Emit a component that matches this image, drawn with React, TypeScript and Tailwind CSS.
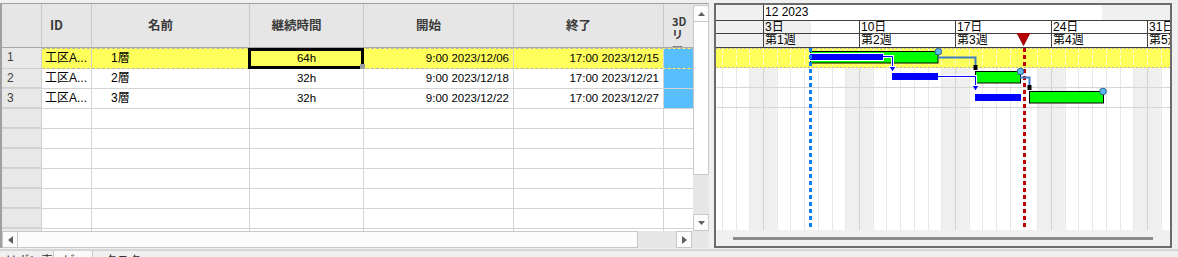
import type { ReactNode } from 'react'

type Task = {
  no: number
  area: string
  name: string
  duration: string
  start: string
  end: string
}

const TASKS: Task[] = [
  { no: 1, area: '工区A...', name: '1層', duration: '64h', start: '9:00 2023/12/06', end: '17:00 2023/12/15' },
  { no: 2, area: '工区A...', name: '2層', duration: '32h', start: '9:00 2023/12/18', end: '17:00 2023/12/21' },
  { no: 3, area: '工区A...', name: '3層', duration: '32h', start: '9:00 2023/12/22', end: '17:00 2023/12/27' },
]

const EMPTY_ROWS = [4, 5, 6, 7, 8, 9, 10]

const WEEKS = [
  { day: '3日', week: '第1週' },
  { day: '10日', week: '第2週' },
  { day: '17日', week: '第3週' },
  { day: '24日', week: '第4週' },
  { day: '31日', week: '第5週' },
]

// one day on the timeline, in px; day 0 is Sunday 3 Dec
const DAY = 96 / 7
const dayX = (k: number) => 47 + DAY * k
const DAY_INDEXES = Array.from({ length: 33 }, (_, i) => i - 3)

function Arrow({ dir }: { dir: 'up' | 'down' | 'left' | 'right' }) {
  const points = {
    up: '0,4 7,4 3.5,0',
    down: '0,0 7,0 3.5,4',
    left: '5,0 5,8 0,4',
    right: '0,0 0,8 5,4',
  }[dir]
  const vertical = dir === 'up' || dir === 'down'
  return (
    <svg width={vertical ? 7 : 5} height={vertical ? 4 : 8} aria-hidden="true">
      <polygon points={points} fill="#606060" />
    </svg>
  )
}

function HeaderCell({ className, children }: { className: string; children?: ReactNode }) {
  return (
    <div
      className={`flex shrink-0 items-center justify-center border-r border-[#c8c8c8] pr-[20px] font-['Noto_Sans_CJK_JP',sans-serif] text-[12.5px] font-bold text-[#3a3a3a] ${className}`}
    >
      {children}
    </div>
  )
}

function DataCells({ task, selected = false }: { task?: Task; selected?: boolean }) {
  return (
    <>
      <div className="w-[50px] shrink-0 overflow-hidden border-r border-[#d4d4d4] pl-[3px] text-[12px] leading-[19px] whitespace-nowrap">
        {task?.area}
      </div>
      <div className="w-[158px] shrink-0 border-r border-[#d4d4d4] pl-[19px] text-[12px] leading-[19px]">
        {task?.name}
      </div>
      <div className="relative w-[114px] shrink-0 border-r border-[#d4d4d4] text-center text-[11.5px] leading-[19px]">
        {task?.duration}
        {selected ? (
          <>
            <div className="absolute -top-[1px] -right-[1px] -bottom-[1px] -left-[2px] border-[3px] border-black" />
            <div className="absolute -right-[2px] -bottom-[1px] h-[5px] w-[5px] bg-[#9c9c9c]" />
          </>
        ) : null}
      </div>
      <div className="w-[150px] shrink-0 border-r border-[#d4d4d4] pr-[4px] text-right text-[11.5px] leading-[19px]">
        {task?.start}
      </div>
      <div className="w-[150px] shrink-0 border-r border-[#d4d4d4] pr-[4px] text-right text-[11.5px] leading-[19px]">
        {task?.end}
      </div>
      <div className={`w-[29px] shrink-0 ${task ? 'bg-[#58befc]' : ''}`} />
    </>
  )
}

function RowHeader({ no }: { no?: number }) {
  return (
    <div className="w-[40px] shrink-0 border-r border-b border-[#d0d0d0] bg-[#e8e8e8] pl-[5px] text-[12px] leading-[19px] text-[#404040]">
      {no}
    </div>
  )
}

function TaskGrid() {
  const [first, ...rest] = TASKS

  return (
    <div className="flex h-[245px] w-[709px] shrink-0 flex-col border-t border-l-2 border-[#a0a0a0]">
      <div className="flex h-[227px]">
        <div className="w-[691px] shrink-0 bg-white">
          <div className="flex h-[44px] border-b border-[#a8a8a8] bg-[#e6e6e6]">
            <div className="w-[40px] shrink-0 border-r border-[#c8c8c8]" />
            <HeaderCell className="w-[50px]">ID</HeaderCell>
            <HeaderCell className="w-[158px]">名前</HeaderCell>
            <HeaderCell className="w-[114px]">継続時間</HeaderCell>
            <HeaderCell className="w-[150px]">開始</HeaderCell>
            <HeaderCell className="w-[150px]">終了</HeaderCell>
            <div className="w-[29px] shrink-0 overflow-hidden pt-[11px] pl-[8px] font-['Noto_Sans_CJK_JP',sans-serif] text-[11px] leading-[13px] font-bold break-all text-[#3a3a3a]">
              3Dリーー
            </div>
          </div>

          <div className="h-[183px] overflow-hidden">
            <div className="flex h-[21px]">
              <RowHeader no={first.no} />
              <div className="flex border-y border-dashed border-[#b4b4b4] bg-[#ffff5c]">
                <DataCells task={first} selected />
              </div>
            </div>
            {rest.map((task) => (
              <div key={task.no} className="flex h-[20px] border-b border-[#d4d4d4]">
                <RowHeader no={task.no} />
                <DataCells task={task} />
              </div>
            ))}
            {EMPTY_ROWS.map((row) => (
              <div key={row} className="flex h-[20px] border-b border-[#d4d4d4]">
                <RowHeader />
                <DataCells />
              </div>
            ))}
          </div>
        </div>

        <div className="flex w-[16px] shrink-0 flex-col bg-[#e6e6e6]">
          <div className="mt-[1px] flex h-[17px] items-center justify-center border border-[#c8c8c8] bg-[#fcfcfc]">
            <Arrow dir="up" />
          </div>
          <div className="h-[153px] border-x border-b border-[#c8c8c8] bg-white" />
          <div className="flex-1" />
          <div className="flex h-[17px] items-center justify-center border border-[#c8c8c8] bg-[#fcfcfc]">
            <Arrow dir="down" />
          </div>
        </div>
      </div>

      <div className="flex h-[17px] bg-[#e6e6e6]">
        <div className="flex w-[16px] items-center justify-center border border-[#c8c8c8] bg-[#fcfcfc]">
          <Arrow dir="left" />
        </div>
        <div className="w-[620px] border-y border-r border-[#c8c8c8] bg-[#fcfcfc]" />
        <div className="w-[38px]" />
        <div className="flex w-[16px] items-center justify-center border border-[#c8c8c8] bg-[#fcfcfc]">
          <Arrow dir="right" />
        </div>
        <div className="flex-1" />
      </div>
    </div>
  )
}

function TimelineBody() {
  return (
    <svg width={454} height={182} className="block" aria-hidden="true">
      <rect width={454} height={182} fill="#ffffff" />
      {[0, 1, 2, 3, 4].map((w) => (
        <rect key={w} x={dayX(7 * w - 1)} y={0} width={DAY * 2} height={182} fill="#efefef" />
      ))}
      {DAY_INDEXES.map((k) => {
        const x = Math.round(dayX(k)) + 0.5
        return (
          <line
            key={k}
            x1={x}
            x2={x}
            y1={0}
            y2={182}
            stroke={k % 7 === 0 ? '#d2d2d2' : '#e8e8e8'}
          />
        )
      })}
      <line x1={0} x2={454} y1={39.5} y2={39.5} stroke="#d6d6d6" />
      <line x1={0} x2={454} y1={59.5} y2={59.5} stroke="#d6d6d6" />

      <rect x={0} y={0} width={454} height={20} fill="#ffff5c" />
      {DAY_INDEXES.map((k) => {
        const x = Math.round(dayX(k)) + 0.5
        return (
          <line key={k} x1={x} x2={x} y1={1} y2={19} stroke="#ffffd8" strokeDasharray="4 2" />
        )
      })}
      <line x1={0} x2={454} y1={0.5} y2={0.5} stroke="#b8b8b8" strokeDasharray="2 2" />
      <line x1={0} x2={454} y1={19.5} y2={19.5} stroke="#b8b8b8" strokeDasharray="2 2" />

      <line x1={308.5} x2={308.5} y1={0} y2={182} stroke="#c00000" strokeWidth={3} strokeDasharray="4 3" />

      <rect x={94.5} y={3.5} width={127.5} height={11.5} fill="#00ff00" stroke="#000" />
      <rect x={259.5} y={23.5} width={45} height={11.5} fill="#00ff00" stroke="#000" />
      <rect x={313.5} y={43.5} width={74} height={11.5} fill="#00ff00" stroke="#000" />

      <rect x={93} y={5} width={75} height={8} fill="#ffffff" />
      <rect x={94} y={6} width={73} height={6} fill="#0000ff" />
      <rect x={176} y={25} width={46} height={7} fill="#0000ff" />
      <rect x={259} y={46} width={46} height={7} fill="#0000ff" />

      <polyline points="167,8.5 176.5,8.5 176.5,19" fill="none" stroke="#ffffff" strokeWidth={3} />
      <polyline points="167,8.5 176.5,8.5 176.5,19" fill="none" stroke="#0000ff" />
      <polygon points="173,18.5 180,18.5 176.5,24" fill="#0000ff" stroke="#ffffff" />
      <polyline points="222,28.5 259.5,28.5 259.5,38" fill="none" stroke="#ffffff" strokeWidth={3} />
      <polyline points="222,28.5 259.5,28.5 259.5,38" fill="none" stroke="#0000ff" />
      <polygon points="256,37.5 263,37.5 259.5,43" fill="#0000ff" stroke="#ffffff" />

      <polyline points="222,9.5 259.5,9.5 259.5,18" fill="none" stroke="#3f7cc4" strokeWidth={2} />
      <rect x={257.5} y={17} width={4} height={5} fill="#000" />
      <polyline points="304,29.5 313.5,29.5 313.5,38" fill="none" stroke="#3f7cc4" strokeWidth={2} />
      <rect x={311.5} y={37} width={4} height={5} fill="#000" />

      <circle cx={222.3} cy={3.7} r={3.3} fill="#5cb8ee" stroke="#2d5d8f" />
      <circle cx={304.5} cy={23.5} r={3.3} fill="#5cb8ee" stroke="#2d5d8f" />
      <circle cx={387} cy={43.5} r={3.3} fill="#5cb8ee" stroke="#2d5d8f" />

      <line x1={94.5} x2={94.5} y1={0} y2={182} stroke="#0d7df8" strokeWidth={3} strokeDasharray="4 3" />
    </svg>
  )
}

function Timeline() {
  return (
    <div className="ml-[5px] h-[245px] w-[458px] shrink-0 border-2 border-[#6b6b6b] bg-white">
      <div className="relative flex h-full flex-col text-[12px] text-black">
        <div className="flex h-[16px] border-b border-[#404040]">
          <div className="w-[47px] shrink-0 bg-[#f0f0f0]" />
          <div className="w-[339px] shrink-0 border-l border-[#404040] pl-[1px] leading-[15px]">12 2023</div>
          <div className="flex-1 bg-[#f0f0f0]" />
        </div>
        <div className="flex h-[13px] border-b border-[#404040]">
          <div className="w-[47px] shrink-0 bg-[#f0f0f0]" />
          {WEEKS.map((w, i) => (
            <div
              key={w.day}
              className={`overflow-hidden border-l border-[#404040] pl-[1px] leading-[12px] whitespace-nowrap ${
                i === 0 ? 'bg-[linear-gradient(to_right,#f0f0f0_47px,#ffffff_47px)]' : ''
              } ${i === WEEKS.length - 1 ? 'flex-1' : 'w-[96px] shrink-0'}`}
            >
              {w.day}
            </div>
          ))}
        </div>
        <div className="flex h-[14px] border-b border-[#404040]">
          <div className="w-[47px] shrink-0 bg-[#f0f0f0]" />
          {WEEKS.map((w, i) => (
            <div
              key={w.week}
              className={`overflow-hidden border-l border-[#404040] pl-[1px] leading-[13px] whitespace-nowrap ${
                i === 0 ? 'bg-[linear-gradient(to_right,#f0f0f0_47px,#ffffff_47px)]' : ''
              } ${i === WEEKS.length - 1 ? 'flex-1' : 'w-[96px] shrink-0'}`}
            >
              {w.week}
            </div>
          ))}
        </div>

        <TimelineBody />

        <div className="h-[16px] bg-[#f0f0f0] pt-[7px] pl-[17px]">
          <div className="h-[3px] w-[420px] bg-[#8c8c8c]" />
        </div>

        <svg
          width={14}
          height={13}
          className="absolute top-[28px] left-[301px]"
          aria-hidden="true"
        >
          <polygon points="0,0 13,0 6.5,12.5" fill="#b40000" stroke="#8a0000" strokeWidth={0.8} />
        </svg>
      </div>
    </div>
  )
}

export default function App() {
  return (
    <div className="h-[257px] w-[1178px] overflow-hidden bg-[#f0f0f0] pt-[3px] font-['Liberation_Sans','Noto_Sans_CJK_JP',sans-serif] text-black">
      <div className="flex">
        <TaskGrid />
        <Timeline />
      </div>
      <div className="mt-[1px] flex h-[8px] border-t-2 border-[#d6d6d6] text-[12px] leading-[12px] text-[#333]">
        <div className="w-[53px] shrink-0 overflow-hidden pt-[4px] pl-[5px] whitespace-nowrap">リボン表示</div>
        <div className="w-[40px] shrink-0 overflow-hidden border-x border-[#c8c8c8] bg-[#fafafa] pt-[4px] pl-[9px] whitespace-nowrap">ビュー</div>
        <div className="overflow-hidden pt-[4px] pl-[12px] whitespace-nowrap">タスク</div>
      </div>
    </div>
  )
}
